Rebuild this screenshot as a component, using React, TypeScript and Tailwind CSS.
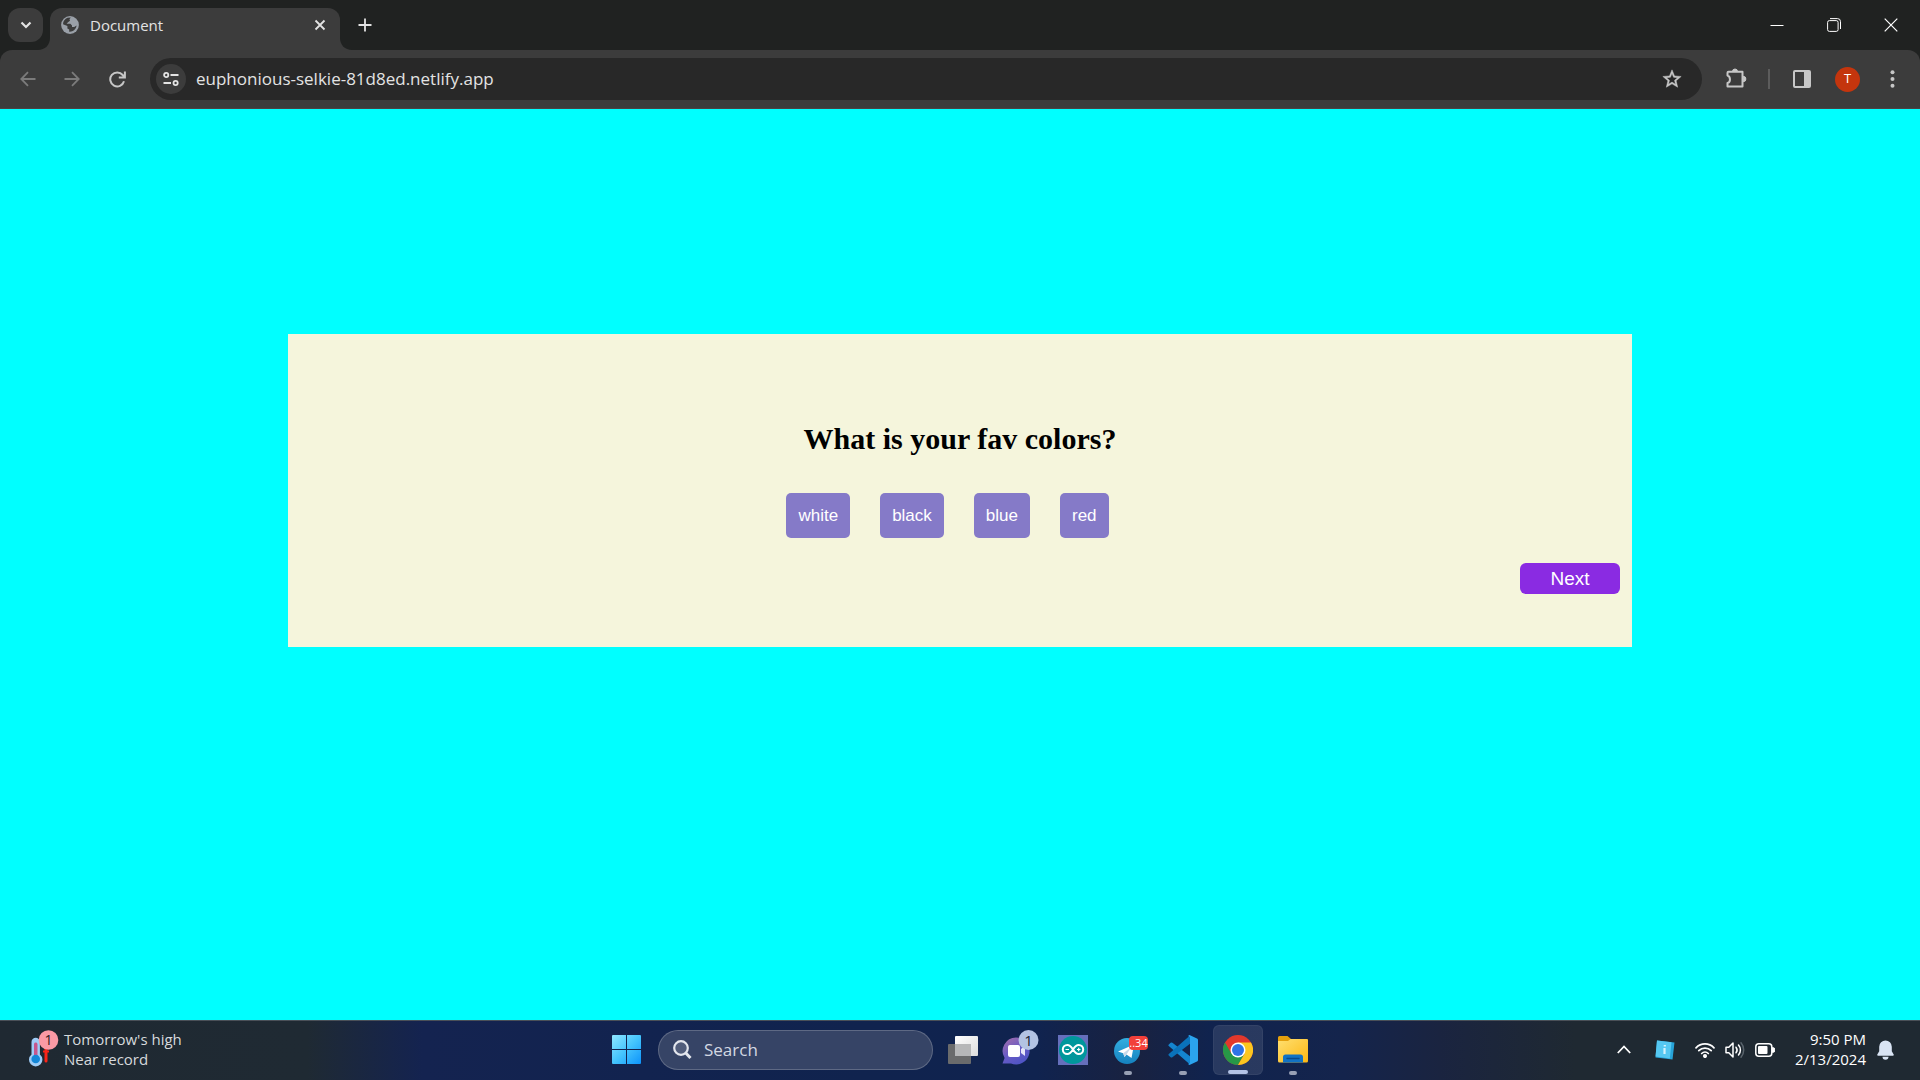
import type { ReactNode } from "react";

function TabStrip() {
  return (
    <div className="flex h-[50px] items-end bg-[#202221] text-[#e3e3e3]">
      <div className="flex h-[50px] w-[50px] items-center pl-2">
        <button aria-label="Search tabs" className="flex h-[34px] w-[35px] items-center justify-center rounded-xl bg-[#3c3c3c]">
          <svg width="12" height="8" viewBox="0 0 12 8" fill="none" stroke="currentColor" strokeWidth="2.2"><path d="M1.5 1.5 6 6l4.500-4.500" /></svg>
        </button>
      </div>
      <div className="relative flex h-[42px] w-[290px] items-center rounded-t-xl bg-[#3c3c3c] pr-[14px] pl-[11px] pb-2">
        <svg className="absolute bottom-0 -left-3 text-[#3c3c3c]" width="12" height="12" viewBox="0 0 12 12" fill="currentColor"><path d="M12 0v12H0C7 12 12 7 12 0z" /></svg>
        <svg className="absolute -right-3 bottom-0 text-[#3c3c3c]" width="12" height="12" viewBox="0 0 12 12" fill="currentColor"><path d="M0 0v12h12C5 12 0 7 0 0z" /></svg>
        <svg width="18" height="18" viewBox="0 0 18 18">
          <circle cx="9" cy="9" r="8.900" fill="#9aa0a8" />
          <path d="M6.500 1.800 9.800 1.600 8.500 3.200 9 4.800 7 6.200 5.600 7.800H9.400L11 9.400V11H13.200L15.600 9.600C15.200 13.500 11.600 16.200 8.200 15.800V13.600L6.400 12.400V10L2 8.200C2 5.200 4 2.700 6.500 1.800z" fill="#3c3c3c" />
          <path d="M10.400 2.600 13 3.500 15.400 6.600 13.400 8 11 7.200 10 5.400 11.200 4.200z" fill="#9aa0a8" />
        </svg>
        <span className="ml-[11px] flex-1 text-[15px] leading-5">Document</span>
        <button aria-label="Close tab">
          <svg width="12" height="12" viewBox="0 0 12 12" stroke="currentColor" strokeWidth="1.800"><path d="m1.500 1.500 9 9m0-9-9 9" /></svg>
        </button>
      </div>
      <button aria-label="New tab" className="mb-[18px] ml-[18px]">
        <svg width="14" height="14" viewBox="0 0 14 14" stroke="currentColor" strokeWidth="1.800"><path d="M7 .5v13M.5 7h13" /></svg>
      </button>
      <div className="ml-auto flex h-[50px] items-center pr-px text-white">
        <button aria-label="Minimize" className="flex h-full w-[57px] items-center justify-center">
          <svg width="14" height="14" viewBox="0 0 14 14" stroke="currentColor"><path d="M.5 7.500h13" /></svg>
        </button>
        <button aria-label="Restore" className="flex h-full w-[57px] items-center justify-center">
          <svg width="14" height="14" viewBox="0 0 14 14" fill="none" stroke="currentColor"><rect x=".6" y="2.600" width="10.500" height="10.800" rx="1.800" /><path d="M3 .6h7.500a3 3 0 0 1 3 3V11" /></svg>
        </button>
        <button aria-label="Close" className="flex h-full w-[57px] items-center justify-center">
          <svg width="14" height="14" viewBox="0 0 14 14" stroke="currentColor" strokeWidth="1.200"><path d="m.7.7 12.600 12.600m0-12.600L.7 13.300" /></svg>
        </button>
      </div>
    </div>
  );
}

function Toolbar() {
  return (
    <div className="bg-[#202221]">
      <div className="flex h-[59px] items-center rounded-t-xl border-b border-[#4a4444] bg-[#3c3c3c] text-[#c7c7c7]">
        <button aria-label="Back" className="ml-5 text-[#7b7b7b]">
          <svg width="16" height="16" viewBox="0 0 16 16" fill="none" stroke="currentColor" strokeWidth="1.800"><path d="M15.500 8H1.500M8 1.200 1.300 8 8 14.800" /></svg>
        </button>
        <button aria-label="Forward" className="ml-7 text-[#7b7b7b]">
          <svg width="16" height="16" viewBox="0 0 16 16" fill="none" stroke="currentColor" strokeWidth="1.800"><path d="M.5 8h14M8 1.200 14.700 8 8 14.800" /></svg>
        </button>
        <button aria-label="Reload" className="ml-[29px]">
          <svg width="17" height="17" viewBox="0 0 17 17" fill="none" stroke="currentColor" strokeWidth="2"><path d="M15 10.300A7 7 0 1 1 13.700 4L15.300 5.800M15.900.5V6.400H9.800" /></svg>
        </button>
        <div className="ml-6 flex h-[42px] flex-1 items-center rounded-full bg-[#282828] pr-[19px] pl-[6px]">
          <button aria-label="View site information" className="flex size-[30px] items-center justify-center rounded-full bg-[#3c3c3c] text-[#e3e3e3]">
            <svg width="16" height="14" viewBox="0 0 16 14" fill="none" stroke="currentColor" strokeWidth="1.800"><circle cx="3.200" cy="3" r="2.100" /><path d="M7.500 3H15.500M.5 11H8" /><circle cx="12.600" cy="11" r="2.100" /></svg>
          </button>
          <input aria-label="Address" defaultValue="euphonious-selkie-81d8ed.netlify.app" className="ml-[10px] min-w-0 flex-1 bg-transparent text-[17px] leading-6 text-[#e3e3e3] outline-none" />
          <button aria-label="Bookmark this tab">
            <svg width="22" height="22" viewBox="0 0 24 24" fill="currentColor"><path d="m22 9.240-7.190-.62L12 2 9.190 8.630 2 9.240l5.460 4.730L5.820 21 12 17.270 18.180 21l-1.630-7.030L22 9.240zM12 15.400l-3.760 2.270 1-4.280-3.320-2.880 4.380-.38L12 6.100l1.710 4.040 4.380.38-3.320 2.880 1 4.280L12 15.400z" stroke="currentColor" strokeWidth=".5" /></svg>
          </button>
        </div>
        <button aria-label="Extensions" className="ml-[23px]">
          <svg width="22" height="22" viewBox="0 0 22 22"><path d="M3.500 3.800H17.500V18.500H2.500V15C5.800 14.300 5.800 8.500 2.500 7.600V4.800a1 1 0 0 1 1-1z" fill="none" stroke="currentColor" strokeWidth="2" strokeLinejoin="round" /><path d="M7.500 3.500a2.500 2.500 0 0 1 5 0zM18.200 8.300a2.700 2.700 0 0 1 0 5.400z" fill="currentColor" stroke="currentColor" /></svg>
        </button>
        <div className="ml-[21px] h-5 w-0.5 bg-[#5c5c5c]" />
        <button aria-label="Side panel" className="ml-[23px]">
          <svg width="18" height="18" viewBox="0 0 18 18"><rect x="1" y="1" width="16" height="16" rx="1" fill="none" stroke="currentColor" strokeWidth="2" /><path d="M11 1h6v16h-6z" fill="currentColor" /></svg>
        </button>
        <button aria-label="Profile" className="ml-6 flex size-[25px] items-center justify-center rounded-full bg-[#c4350d] text-[13px] text-white">T</button>
        <button aria-label="Menu" className="mr-[25px] ml-[30px]">
          <svg width="5" height="18" viewBox="0 0 5 18" fill="currentColor"><circle cx="2.500" cy="2.200" r="2" /><circle cx="2.500" cy="9" r="2" /><circle cx="2.500" cy="15.800" r="2" /></svg>
        </button>
      </div>
    </div>
  );
}

function Quiz() {
  const answers = ["white", "black", "blue", "red"];
  return (
    <main className="flex flex-1 flex-col items-center bg-[#00ffff] pt-[225px]">
      <section className="flex w-[70%] flex-col items-center bg-[#f5f5dc] px-3 pt-[88px] pb-[53px]">
        <h1 className="font-['Liberation_Serif',serif] text-[30px] leading-[34px] font-bold text-black">What is your fav colors?</h1>
        <div className="mt-[37px] mr-[25px] flex gap-[30px] font-['Liberation_Sans',sans-serif] text-[17px] leading-[21px] text-white">
          {answers.map((a) => (
            <button key={a} className="rounded-[5px] bg-[#857ac8] p-3">{a}</button>
          ))}
        </div>
        <button className="mt-[25px] w-[100px] self-end rounded-md bg-[#8a2be2] py-[5px] font-['Liberation_Sans',sans-serif] text-[19px] leading-[21px] text-white">Next</button>
      </section>
    </main>
  );
}

function TaskButton({ label, children, running, active }: { label: string; children: ReactNode; running?: boolean; active?: boolean }) {
  return (
    <button
      aria-label={label}
      className={active
        ? "relative flex size-[50px] items-center justify-center rounded-md border border-white/5 bg-white/10"
        : "relative flex size-[50px] items-center justify-center"}
    >
      {children}
      {running && <span className="absolute bottom-0 h-1 w-2 rounded-full bg-[#98a0b4]" />}
      {active && <span className="absolute bottom-0 h-1 w-5 rounded-full bg-[#b3c3e6]" />}
    </button>
  );
}

function Taskbar() {
  return (
    <footer className="grid h-[60px] grid-cols-[1fr_auto_1fr] items-center border-t border-[#4a5058] bg-[linear-gradient(90deg,#1f2932_0%,#1f2a33_16%,#142350_22%,#10234e_45%,#10234f_54%,#192240_59%,#10234e_63%,#14244c_70%,#1a2440_75%,#1f2932_82%,#1f2932_100%)] pb-0.5 text-white">
      <button className="flex items-center justify-self-start pb-0.5 pl-7 text-left text-[15px] leading-5 text-[#d6d9dc]">
        <svg width="33" height="38" viewBox="0 0 33 38">
          <path d="M18 18.500V31" stroke="#fb2418" strokeWidth="3" strokeLinecap="round" />
          <path d="M15 21.500h6" stroke="#fb2418" strokeWidth="2" />
          <path d="M3.500 12a4.200 4.200 0 0 1 8.400 0v12.500a6.700 6.700 0 1 1-8.400 0z" fill="#9fccf6" />
          <path d="M6 14a1.800 1.800 0 0 1 3.500 0v13H6z" fill="#c7568c" />
          <circle cx="7.700" cy="29" r="4.300" fill="#1387d8" />
          <circle cx="20.500" cy="10" r="9.800" fill="#fb9aa5" />
          <text x="20.500" y="15" textAnchor="middle" fontSize="14" fill="#2b1a20">1</text>
        </svg>
        <span className="ml-[3px]">Tomorrow's high<br />Near record</span>
      </button>

      <div className="flex items-center pl-[10px]">
        <button aria-label="Start" className="mr-[17px]">
          <svg width="29" height="29" viewBox="0 0 29 29">
            <defs><linearGradient id="win" x1="0" y1="0" x2="1" y2="1"><stop stopColor="#8fe6ff" /><stop offset=".5" stopColor="#45c5fd" /><stop offset="1" stopColor="#0d93fb" /></linearGradient></defs>
            <path d="M1 0h13v14H0V1a1 1 0 0 1 1-1zM15 0h13a1 1 0 0 1 1 1v13H15zM0 15h14v14H1a1 1 0 0 1-1-1zM15 15h14v13a1 1 0 0 1-1 1H15z" fill="url(#win)" />
          </svg>
        </button>
        <label className="flex h-10 w-[275px] items-center rounded-full border border-white/20 bg-[#364466] pl-[14px]">
          <svg width="19" height="20" viewBox="0 0 19 20" fill="none" stroke="#e4e7ee" strokeWidth="2.200"><circle cx="8" cy="8" r="6.800" fill="#6b7590" fillOpacity=".5" /><path d="m12.800 13 4.700 5" strokeWidth="3" /></svg>
          <input aria-label="Search" placeholder="Search" className="ml-3 w-48 bg-transparent text-[17px] leading-6 outline-none placeholder:text-[#d3d8e2]" />
        </label>
        <div className="ml-[5px] flex items-center gap-[5px]">
          <TaskButton label="Task view">
            <svg width="30" height="28" viewBox="0 0 30 28">
              <defs><linearGradient id="tv" x1="0" y1="0" x2="1" y2="1"><stop stopColor="#fff" /><stop offset="1" stopColor="#dcdcdc" /></linearGradient></defs>
              <rect y="8" width="23" height="20" rx="1" fill="#6a6b6c" /><rect x="7" width="23" height="20" rx="1" fill="url(#tv)" /><path d="M7 8h16v12H7z" fill="#b6b7b8" />
            </svg>
          </TaskButton>
          <TaskButton label="Chat">
            <svg className="mb-1 ml-1" width="38" height="38" viewBox="0 0 38 38">
              <defs><linearGradient id="chat" x1="0" y1="0" x2=".6" y2="1"><stop stopColor="#a66fa8" /><stop offset=".55" stopColor="#6a5cc5" /><stop offset="1" stopColor="#4f54c5" /></linearGradient></defs>
              <path d="M15 8.500A13.500 13.500 0 1 1 10 34.500H1.500L3.600 29A13.500 13.500 0 0 1 15 8.500z" fill="url(#chat)" />
              <rect x="7" y="16" width="12" height="12" rx="2" fill="#fff" /><path d="m20 20 4-3v10l-4-3z" fill="#e7e6fa" />
              <circle cx="27.500" cy="11" r="10" fill="#b3c3e3" />
              <text x="27.500" y="16.500" textAnchor="middle" fontSize="15" fill="#151b30">1</text>
            </svg>
          </TaskButton>
          <TaskButton label="Arduino IDE">
            <svg width="30" height="30" viewBox="0 0 30 30" fill="none">
              <path d="M0 0h30v30H0z" fill="#656fbc" /><circle cx="15" cy="15" r="14" fill="#00979c" />
              <path d="M15 14.500C12.500 10.500 10.800 10 9.300 10a4.500 4.500 0 0 0 0 9c2.500 0 4.200-2 5.700-4.500S18.200 10 20.700 10a4.500 4.500 0 0 1 0 9c-2.500 0-4.200-2-5.700-4.500z" stroke="#fff" strokeWidth="2" />
              <path d="M7.500 14.500h3.500M19 14.500h3.500M20.700 12.800v3.500" stroke="#fff" strokeWidth="1.200" />
            </svg>
          </TaskButton>
          <TaskButton label="Telegram" running>
            <svg className="ml-1" width="36" height="30" viewBox="0 0 36 30">
              <defs><linearGradient id="tg" x1="0" y1="0" x2="0" y2="1"><stop stopColor="#34aee0" /><stop offset="1" stopColor="#1582bf" /></linearGradient></defs>
              <circle cx="15" cy="16" r="13" fill="url(#tg)" /><path d="M6 16.500 22 9.500 19.500 23 14.500 19.500 12.500 22 11.200 18.200z" fill="#fff" /><path d="m11.200 18.200 8-6-4.700 7.300-2 2.500z" fill="#c8daea" />
              <rect x="17" y="1" width="19" height="14" rx="4" fill="#f2403a" />
              <text x="26.500" y="12" textAnchor="middle" fontSize="11" fill="#fff">..34</text>
            </svg>
          </TaskButton>
          <TaskButton label="Visual Studio Code" running>
            <svg width="30" height="30" viewBox="0 0 30 30">
              <path d="M.8 9.500 2.600 7.800a1.500 1.500 0 0 1 1.800 0L22 21.200V29.500L.8 11a1 1 0 0 1 0-1.500z" fill="#1485cf" />
              <path d="M.8 20.500 2.600 22.200a1.500 1.500 0 0 0 1.800 0L22 8.800V.5L.8 19a1 1 0 0 0 0 1.500z" fill="#0a72ba" />
              <path d="M21.500 0 29 3.500a1.800 1.800 0 0 1 1 1.500v20a1.800 1.800 0 0 1-1 1.500L21.500 30l-1.500-1 2-1V2l-2-1z" fill="#2ba4ee" />
            </svg>
          </TaskButton>
          <TaskButton label="Google Chrome" active>
            <svg width="30" height="30" viewBox="0 0 30 30">
              <circle cx="15" cy="15" r="15" fill="#e2382c" />
              <path d="M2 7.500A15 15 0 0 0 15 30L21.500 18.700 8.500 18.700z" fill="#279847" />
              <path d="M28 7.500H15L21.500 18.700 15 30A15 15 0 0 0 28 7.500z" fill="#fcc61f" />
              <circle cx="15" cy="15" r="7.500" fill="#fff" /><circle cx="15" cy="15" r="6" fill="#2f73e5" />
            </svg>
          </TaskButton>
          <TaskButton label="File Explorer" running>
            <svg width="30" height="27" viewBox="0 0 30 27">
              <defs><linearGradient id="fe" x1="0" y1="0" x2="1" y2="1"><stop stopColor="#ffdf70" /><stop offset="1" stopColor="#fdb813" /></linearGradient></defs>
              <path d="M0 1.500A1.500 1.500 0 0 1 1.500 0h8l3.500 3H28v6H0z" fill="#e5a00d" />
              <path d="M0 5h10l2.500-2H29a1 1 0 0 1 1 1v21a1.500 1.500 0 0 1-1.500 1.500h-27A1.500 1.500 0 0 1 0 25z" fill="url(#fe)" />
              <path d="M5 26.500V21a2.500 2.500 0 0 1 2.500-2.500h15A2.500 2.500 0 0 1 25 21v5.500z" fill="#1273c4" /><path d="M9 22.500h12" stroke="#0a4a8d" strokeWidth="1.400" strokeLinecap="round" />
            </svg>
          </TaskButton>
        </div>
      </div>

      <div className="flex items-center justify-self-end pr-[26px]">
        <button aria-label="Show hidden icons">
          <svg width="14" height="9" viewBox="0 0 14 9" fill="none" stroke="currentColor" strokeWidth="1.800"><path d="m.8 8 6.200-6.500L13.200 8" /></svg>
        </button>
        <button aria-label="System information" className="ml-6">
          <svg width="20" height="20" viewBox="0 0 20 20"><path d="m2 .5 17.500 2L17.500 19.500.5 17.500z" fill="#27a3d8" /><path d="m2 .5 14.500 1.700L14.800 18.500.5 16.500z" fill="#55c8f2" /><path d="M9.500 8v6M9.800 5v1.500" stroke="#d5f3fd" strokeWidth="2.200" /></svg>
        </button>
        <button aria-label="Network, volume, battery" className="ml-5 flex items-center">
          <svg width="20" height="16" viewBox="0 0 20 16" fill="none" stroke="currentColor" strokeWidth="1.700" strokeLinecap="round"><path d="M1 5.800a12.500 12.500 0 0 1 18 0M3.800 8.700a8.600 8.600 0 0 1 12.400 0M6.700 11.500a4.700 4.700 0 0 1 6.600 0" /><circle cx="10" cy="14" r="1.200" fill="currentColor" /></svg>
          <svg className="ml-[10px]" width="20" height="18" viewBox="0 0 20 18" fill="none" stroke="currentColor" strokeWidth="1.500" strokeLinejoin="round" strokeLinecap="round"><path d="M1 6.200h2.800L8 2v14l-4.200-4.200H1zM11 6.200a4.500 4.500 0 0 1 0 5.600M13.500 4a7.500 7.500 0 0 1 0 10" /><path d="M16 1.800a11 11 0 0 1 0 14.400" stroke="#59636c" /></svg>
          <svg className="ml-[10px]" width="20" height="14" viewBox="0 0 20 14"><rect x=".8" y=".8" width="16" height="12.400" rx="3" fill="none" stroke="currentColor" strokeWidth="1.500" /><rect x="3" y="3" width="9.500" height="8" rx="1" fill="currentColor" /><path d="M17.500 4.500a2.500 2.500 0 0 1 0 5z" fill="currentColor" stroke="currentColor" /></svg>
        </button>
        <button className="ml-5 pb-0.5 text-right text-[15px] leading-5">9:50 PM<br />2/13/2024</button>
        <button aria-label="Notifications" className="ml-[11px]">
          <svg width="17" height="20" viewBox="0 0 17 20" fill="#d9e4f4"><path d="M8.500.5a6.300 6.300 0 0 1 6.300 6.300v4.500l1.900 3.200a.8.8 0 0 1-.7 1.200H1a.8.8 0 0 1-.7-1.200l1.900-3.200V6.800A6.300 6.300 0 0 1 8.500.5zM5.500 16.800h6a3 3 0 0 1-6 0z" /></svg>
        </button>
      </div>
    </footer>
  );
}

export default function App() {
  return (
    <div className="flex h-screen flex-col font-['Open_Sans',sans-serif]">
      <header>
        <TabStrip />
        <Toolbar />
      </header>
      <Quiz />
      <Taskbar />
    </div>
  );
}
